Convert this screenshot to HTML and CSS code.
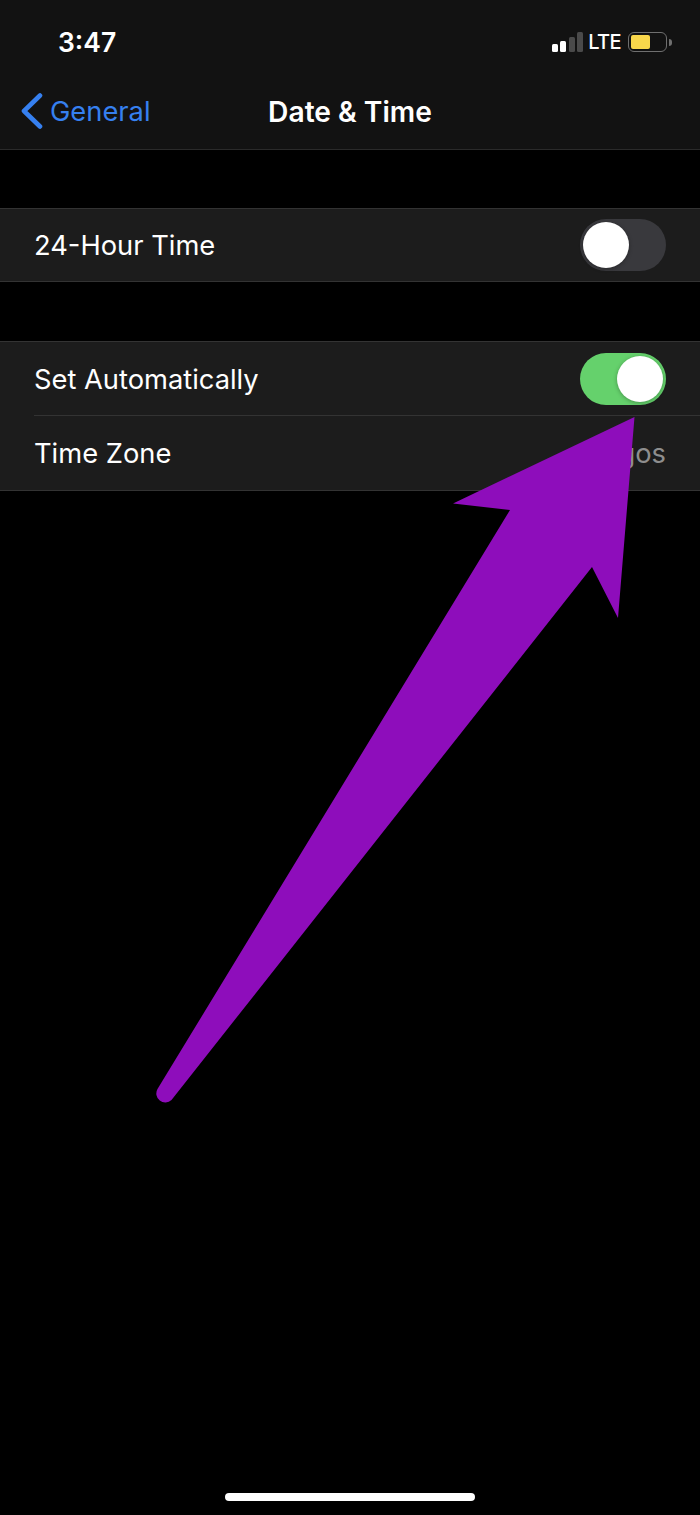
FILE: index.html
```html
<!DOCTYPE html>
<html lang="en">
<head>
    <meta charset="UTF-8">
    <meta name="viewport" content="width=device-width, initial-scale=1.0">
    <title>Date &amp; Time</title>
    <link rel="stylesheet" href="styles.css">
</head>
<body>

    <div class="header">
        <div class="status-bar">
            <span class="clock">3:47</span>
            <div class="status-icons">
                <div class="signal">
                    <span class="bar bar-1"></span>
                    <span class="bar bar-2"></span>
                    <span class="bar bar-3 off"></span>
                    <span class="bar bar-4 off"></span>
                </div>
                <span class="network">LTE</span>
                <div class="battery"><span class="battery-level"></span></div>
                <span class="battery-cap"></span>
            </div>
        </div>
        <div class="nav-bar">
            <a class="back">
                <svg class="back-icon" width="24" height="36" viewBox="0 0 24 36">
                    <path d="M20 2.5 L4 18 L20 33.5" fill="none" stroke="#3680f0" stroke-width="4.6" stroke-linecap="round" stroke-linejoin="round"/>
                </svg>
                <span>General</span>
            </a>
            <span class="nav-title">Date &amp; Time</span>
        </div>
    </div>

    <div class="group first-group">
        <div class="row">
            <span class="label">24-Hour Time</span>
            <div class="switch"><span class="knob"></span></div>
        </div>
    </div>

    <div class="group second-group">
        <div class="row row-divided">
            <span class="label">Set Automatically</span>
            <div class="switch switch-on"><span class="knob"></span></div>
        </div>
        <div class="row row-last">
            <span class="label">Time Zone</span>
            <span class="value">Lagos</span>
        </div>
    </div>

    <div class="home-indicator"></div>

    <!-- arrow drawn over the screenshot -->
    <svg class="arrow" width="700" height="1515" viewBox="0 0 700 1515">
        <path d="M634.5 417 L453 503.5 L510 510 L157.5 1089 A9 9 0 0 0 171.5 1100 L592 567 L618 618 Z" fill="#8e0dbb"/>
    </svg>

</body>
</html>
```

FILE: styles.css
```css
body {
    margin: 0;
    height: 1515px;
    position: relative;
    overflow: hidden;
    background-color: black;
    color: white;
    font-family: Inter, "Liberation Sans", sans-serif;
}
.header {
    height: 149px;
    background-color: #121212;
    border-bottom: 1px solid #2a2a2a;
}
.status-bar {
    height: 84px;
    display: flex;
    justify-content: space-between;
    align-items: center;
    padding: 0 28px 0 58px;
}
.clock {
    font-size: 26.5px;
    font-weight: 600;
}
.status-icons {
    display: flex;
    align-items: center;
}
.signal {
    display: flex;
    align-items: flex-end;
    gap: 2.5px;
    height: 20px;
    margin-right: 5px;
}
.bar {
    width: 6px;
    border-radius: 1.5px;
    background-color: white;
}
.bar.off {
    background-color: #4a4a4a;
}
.bar-1 { height: 8px; }
.bar-2 { height: 11px; }
.bar-3 { height: 15px; }
.bar-4 { height: 20px; }
.network {
    font-size: 20px;
    font-weight: 500;
    letter-spacing: -0.6px;
    margin-right: 7px;
}
.battery {
    width: 33px;
    height: 14px;
    padding: 2px;
    border: 1.5px solid #6f6f6f;
    border-radius: 6px;
    display: flex;
}
.battery-level {
    width: 19px;
    border-radius: 2px;
    background-color: #f9d74b;
}
.battery-cap {
    width: 3px;
    height: 7px;
    margin-left: 2px;
    background-color: #6f6f6f;
    border-radius: 0 3px 3px 0;
}
.nav-bar {
    height: 65px;
    box-sizing: border-box;
    padding-bottom: 10px;
    display: flex;
    align-items: center;
    justify-content: center;
    position: relative;
}
.back {
    position: absolute;
    left: 20px;
    top: 9px;
    display: flex;
    align-items: center;
    gap: 6px;
    color: #3680f0;
    font-size: 27.3px;
}
.nav-title {
    font-size: 28.2px;
    font-weight: 600;
}
.group {
    background-color: #1c1c1c;
    border-top: 1px solid #333333;
    border-bottom: 1px solid #333333;
}
.first-group {
    margin-top: 58px;
}
.second-group {
    margin-top: 59px;
}
.row {
    height: 73px;
    display: flex;
    justify-content: space-between;
    align-items: center;
    padding: 0 34px;
}
.first-group .row {
    height: 72px;
}
.row-divided {
    margin-left: 34px;
    padding-left: 0;
    border-bottom: 1px solid #333333;
}
.row-divided .label {
    padding-top: 2px;
}
.row-last {
    height: 74px;
}
.label {
    font-size: 27.3px;
}
.value {
    font-size: 27.3px;
    color: #8e8e8e;
}
.switch {
    width: 86px;
    height: 52px;
    border-radius: 26px;
    background-color: #39393d;
    display: flex;
    align-items: center;
    padding: 0 3px;
    box-sizing: border-box;
}
.switch-on {
    background-color: #65d16c;
    justify-content: flex-end;
}
.knob {
    width: 46px;
    height: 46px;
    border-radius: 50%;
    background-color: white;
    box-shadow: 0 1px 4px rgba(0, 0, 0, 0.3);
}
.home-indicator {
    position: absolute;
    left: 225px;
    top: 1493px;
    width: 250px;
    height: 8px;
    border-radius: 4px;
    background-color: white;
}
.arrow {
    position: absolute;
    left: 0;
    top: 0;
}
```
